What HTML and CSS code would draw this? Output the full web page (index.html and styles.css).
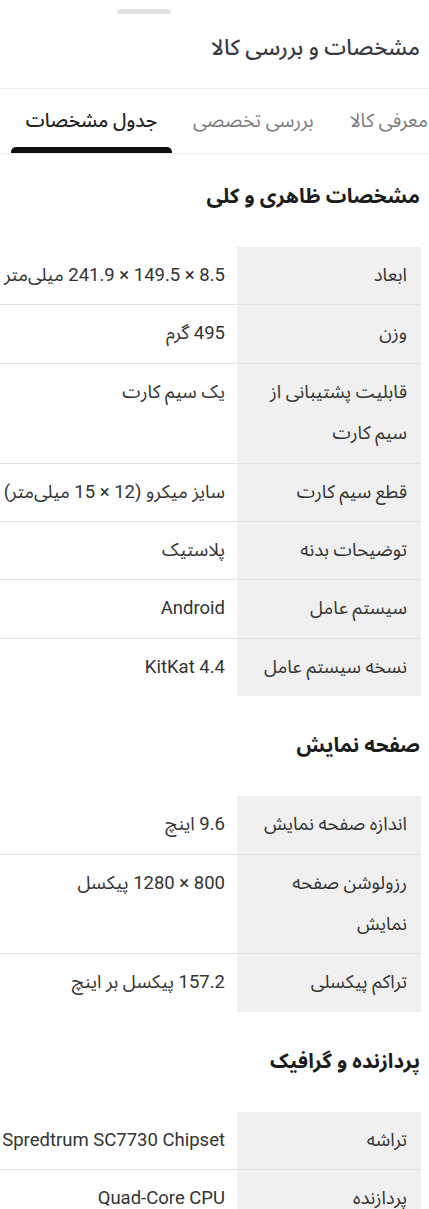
FILE: index.html
```html
<!DOCTYPE html>
<html lang="fa" dir="rtl">
<head>
<meta charset="utf-8">
<title>مشخصات و بررسی کالا</title>
<link rel="stylesheet" href="styles.css">
</head>
<body>
<div class="sheet">
  <div class="handle"></div>
  <header class="header">
    <h1 class="title">مشخصات و بررسی کالا</h1>
  </header>
  <nav class="tabs">
    <div class="tab">معرفی کالا</div>
    <div class="tab">بررسی تخصصی</div>
    <div class="tab active">جدول مشخصات</div>
  </nav>
  <main class="content">
    <section class="section">
      <h2 class="section-title">مشخصات ظاهری و کلی</h2>
      <div class="table">
        <div class="row"><div class="label">ابعاد</div><div class="value">8.5 × 149.5 × 241.9 میلی‌متر</div></div>
        <div class="row"><div class="label">وزن</div><div class="value">495 گرم</div></div>
        <div class="row"><div class="label">قابلیت پشتیبانی از سیم کارت</div><div class="value">یک سیم کارت</div></div>
        <div class="row"><div class="label">قطع سیم کارت</div><div class="value">سایز میکرو (12 × 15 میلی‌متر)</div></div>
        <div class="row"><div class="label">توضیحات بدنه</div><div class="value">پلاستیک</div></div>
        <div class="row"><div class="label">سیستم عامل</div><div class="value">Android</div></div>
        <div class="row"><div class="label">نسخه سیستم عامل</div><div class="value">4.4 KitKat</div></div>
      </div>
    </section>
    <section class="section">
      <h2 class="section-title">صفحه نمایش</h2>
      <div class="table">
        <div class="row"><div class="label">اندازه صفحه نمایش</div><div class="value">9.6 اینچ</div></div>
        <div class="row"><div class="label">رزولوشن صفحه نمایش</div><div class="value">800 × 1280 پیکسل</div></div>
        <div class="row"><div class="label">تراکم پیکسلی</div><div class="value">157.2 پیکسل بر اینچ</div></div>
      </div>
    </section>
    <section class="section">
      <h2 class="section-title">پردازنده و گرافیک</h2>
      <div class="table">
        <div class="row"><div class="label">تراشه</div><div class="value">Spredtrum SC7730 Chipset</div></div>
        <div class="row"><div class="label">پردازنده</div><div class="value">Quad-Core CPU</div></div>
      </div>
    </section>
  </main>
</div>
</body>
</html>
```
FILE: styles.css
```css
html, body {
  margin: 0;
  padding: 0;
  background: #ffffff;
  overflow-x: hidden;
}

body {
  direction: rtl;
  font-family: Roboto, "Noto Sans Arabic", sans-serif;
  color: #333333;
}

.sheet {
  width: 429px;
  overflow: hidden;
}

.handle {
  width: 54px;
  height: 5px;
  border-radius: 3px;
  background: #e2e2e2;
  margin: 9px auto 0 117px;
}

.header {
  padding: 20px 9px 0 0;
  height: 54px;
  border-bottom: 1px solid #eeeeee;
}

.title {
  margin: 0;
  font-size: 22px;
  font-weight: 500;
  line-height: 28px;
  color: #3a3a44;
}

.tabs {
  display: flex;
  gap: 6px;
  margin-right: -14px;
  height: 64px;
  border-bottom: 1px solid #eeeeee;
}

.tab {
  position: relative;
  padding: 0 15px;
  display: flex;
  align-items: center;
  font-size: 19px;
  color: #7a7a7a;
  white-space: nowrap;
}

.tab.active {
  color: #222222;
  font-weight: 500;
}

.tab.active::after {
  content: "";
  position: absolute;
  left: 0;
  right: 0;
  bottom: 0;
  height: 6px;
  background: #0f0f0f;
  border-radius: 5px 5px 0 0;
}

.section-title {
  margin: 35px 9px 37px 0;
  font-size: 20.5px;
  font-weight: 700;
  line-height: 28px;
  color: #1c1c1c;
}

.section:first-child .section-title {
  margin-top: 28px;
}

.table {
  margin-right: 8px;
}

.row {
  display: grid;
  grid-template-columns: 184px 1fr;
  border-bottom: 1px solid #e2e2e2;
}

.row:last-child {
  border-bottom: none;
}

.label {
  background: #f0f0f0;
  padding: 8px 14px 8px 14px;
  font-size: 18.5px;
  line-height: 41.4px;
  color: #333333;
}

.value {
  padding: 8px 12px 8px 0;
  font-size: 18.5px;
  line-height: 41.4px;
  white-space: nowrap;
  color: #333333;
}
```
